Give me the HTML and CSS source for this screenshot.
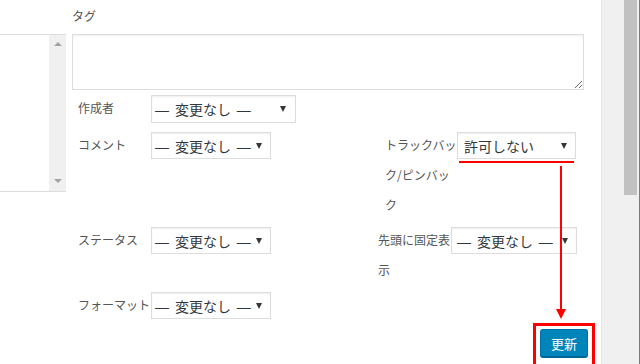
FILE: index.html
```html
<!DOCTYPE html>
<html lang="ja">
<head>
    <meta charset="UTF-8">
    <title>一括編集</title>
    <link rel="stylesheet" href="styles.css">
</head>
<body>
    <div class="screen">
        <div class="main">
            <!-- 左側のカテゴリーリスト -->
            <div class="side">
                <div class="listbox">
                    <div class="listbox-bar">
                        <span class="arrow-up"></span>
                        <span class="arrow-down"></span>
                    </div>
                </div>
            </div>

            <div class="edit">
                <div class="tag-label">タグ</div>
                <textarea class="tags"></textarea>

                <div class="field field-author">
                    <span class="label">作成者</span>
                    <div class="select select-author"><span class="value">— 変更なし —</span><span class="caret"></span></div>
                </div>

                <div class="cols cols-first">
                    <div class="col-left">
                        <div class="field">
                            <span class="label">コメント</span>
                            <div class="select"><span class="value">— 変更なし —</span><span class="caret"></span></div>
                        </div>
                    </div>
                    <div class="col-right">
                        <div class="field field-ping">
                            <span class="label">トラックバック/ピンバック</span>
                            <div class="select select-ping"><span class="value">許可しない</span><span class="caret"></span></div>
                        </div>
                    </div>
                </div>

                <div class="cols">
                    <div class="col-left">
                        <div class="field">
                            <span class="label">ステータス</span>
                            <div class="select"><span class="value">— 変更なし —</span><span class="caret"></span></div>
                        </div>
                    </div>
                    <div class="col-right">
                        <div class="field field-sticky">
                            <span class="label">先頭に固定表示</span>
                            <div class="select select-sticky"><span class="value">— 変更なし —</span><span class="caret"></span></div>
                        </div>
                    </div>
                </div>

                <div class="cols">
                    <div class="col-left">
                        <div class="field">
                            <span class="label">フォーマット</span>
                            <div class="select"><span class="value">— 変更なし —</span><span class="caret"></span></div>
                        </div>
                    </div>
                </div>

                <div class="actions">
                    <button class="update">更新</button>
                </div>
            </div>

            <!-- 赤い注釈 -->
            <div class="mark-underline"></div>
            <div class="mark-line"></div>
            <div class="mark-head"></div>
            <div class="mark-box"></div>
        </div>
        <div class="gutter"></div>
        <div class="scrollbar">
            <div class="thumb"></div>
        </div>
    </div>
</body>
</html>
```

FILE: styles.css
```css
body {
    margin: 0;
    font-family: "Noto Sans CJK JP", "Noto Sans", sans-serif;
    background: #fff;
    overflow: hidden;
}

.screen {
    display: flex;
    width: 640px;
    height: 364px;
}

.main {
    position: relative;
    width: 601px;
    display: flex;
}

.side {
    width: 66px;
    padding-top: 34px;
}

.listbox {
    height: 156px;
    border-top: 1px solid #ddd;
    border-bottom: 1px solid #ddd;
    display: flex;
    justify-content: flex-end;
}

.listbox-bar {
    width: 17px;
    background: #f0f0f0;
    display: flex;
    flex-direction: column;
    justify-content: space-between;
    align-items: center;
    padding: 7px 0 8px;
}

.arrow-up {
    border-left: 4px solid transparent;
    border-right: 4px solid transparent;
    border-bottom: 4px solid #a3a3a3;
}

.arrow-down {
    border-left: 4px solid transparent;
    border-right: 4px solid transparent;
    border-top: 4px solid #a3a3a3;
}

.edit {
    margin-left: 6px;
    flex: 1;
    display: flex;
    flex-direction: column;
}

.tag-label {
    font-size: 12px;
    color: #555;
    line-height: 20px;
    padding-top: 6px;
    height: 28px;
}

.tags {
    width: 512px;
    height: 56px;
    box-sizing: border-box;
    margin: 0;
    border: 1px solid #ddd;
    box-shadow: inset 0 1px 2px rgba(0, 0, 0, 0.07);
    resize: both;
    font-family: inherit;
}

.field {
    display: flex;
    align-items: flex-start;
    padding-left: 6px;
}

.field-author {
    margin-top: 3px;
}

.label {
    width: 73px;
    flex-shrink: 0;
    font-size: 12px;
    line-height: 30px;
    color: #555;
}

.select {
    box-sizing: border-box;
    width: 120px;
    height: 27px;
    margin-top: 2px;
    border: 1px solid #ddd;
    box-shadow: inset 0 1px 2px rgba(0, 0, 0, 0.07);
    display: flex;
    align-items: center;
    padding: 0 8px 0 3px;
    font-family: "Liberation Sans", "Noto Sans CJK JP", sans-serif;
    font-size: 14px;
    color: #32373c;
    white-space: nowrap;
}

.value {
    word-spacing: 2px;
}

.select-author {
    width: 145px;
    height: 28px;
    padding-right: 9px;
}

.caret {
    margin-left: auto;
    border-left: 3px solid transparent;
    border-right: 3px solid transparent;
    border-top: 6px solid #32373c;
}

.cols {
    display: flex;
    margin-top: 5px;
}

.cols-first {
    margin-top: 7px;
}

.col-left {
    width: 306px;
}

.field-ping {
    padding-left: 7px;
}

.field-ping .label {
    width: 72px;
}

.select-ping {
    width: 119px;
    padding-left: 6px;
}

.field-sticky {
    padding-left: 0;
}

.select-sticky {
    width: 126px;
    padding-left: 5px;
}

.actions {
    display: flex;
    justify-content: flex-end;
    padding-right: 13px;
    margin-top: 9px;
}

.update {
    width: 48px;
    height: 28px;
    padding: 0;
    background: #0085ba;
    border: 1px solid #0073aa;
    border-bottom-color: #006799;
    border-radius: 3px;
    box-shadow: 0 1px 0 #006799;
    color: #fff;
    font-family: inherit;
    font-size: 13px;
}

.mark-underline {
    position: absolute;
    left: 459px;
    top: 161px;
    width: 115px;
    height: 2px;
    background: #f00;
}

.mark-line {
    position: absolute;
    left: 560px;
    top: 166px;
    width: 2px;
    height: 144px;
    background: #f00;
}

.mark-head {
    position: absolute;
    left: 556px;
    top: 309px;
    border-left: 5px solid transparent;
    border-right: 5px solid transparent;
    border-top: 10px solid #f00;
}

.mark-box {
    position: absolute;
    left: 533px;
    top: 323px;
    width: 56px;
    height: 38px;
    border: 3px solid #f00;
}

.gutter {
    width: 22px;
    background: #f0f0f0;
    border-left: 1px solid #e5e5e5;
}

.scrollbar {
    width: 16px;
    background: #f0f0f0;
    border-right: 1px solid #3b8bd0;
    box-sizing: border-box;
}

.thumb {
    width: 13px;
    height: 195px;
    background: #c1c1c1;
}
```
